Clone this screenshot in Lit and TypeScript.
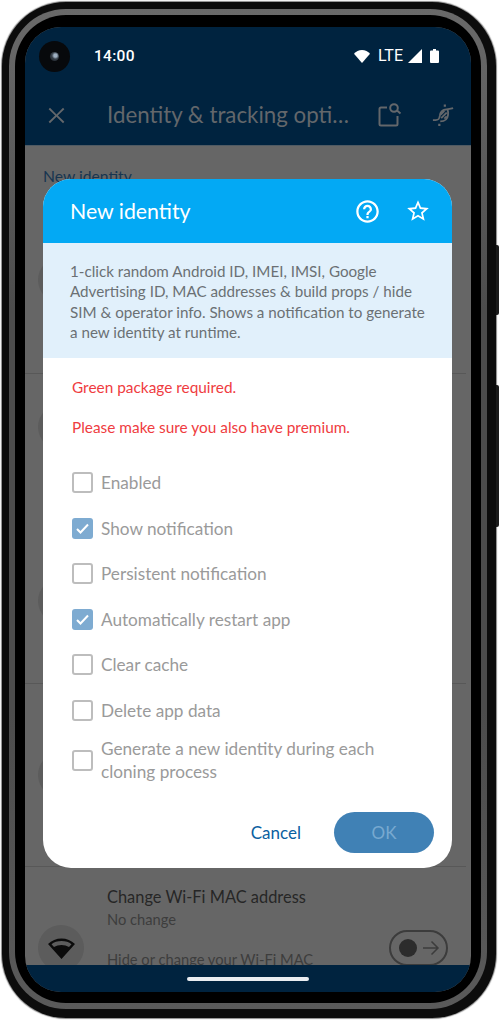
import { LitElement, html, css, svg } from 'lit';
import { customElement } from 'lit/decorators.js';

const OPTIONS = [
  { label: 'Enabled', checked: false },
  { label: 'Show notification', checked: true },
  { label: 'Persistent notification', checked: false },
  { label: 'Automatically restart app', checked: true },
  { label: 'Clear cache', checked: false },
  { label: 'Delete app data', checked: false },
  { label: 'Generate a new identity during each cloning process', checked: false },
];

const icon = (size: number, body: unknown) => html`<svg width=${size} height=${size} viewBox="0 0 24 24" fill="currentColor">${body}</svg>`;

const HELP = svg`<path d="M11 18h2v-2h-2v2zm1-16C6.48 2 2 6.48 2 12s4.48 10 10 10 10-4.48 10-10S17.52 2 12 2zm0 18c-4.41 0-8-3.59-8-8s3.59-8 8-8 8 3.59 8 8-3.59 8-8 8zm0-14c-2.21 0-4 1.79-4 4h2c0-1.1.9-2 2-2s2 .9 2 2c0 2-3 1.75-3 5h2c0-2.25 3-2.5 3-5 0-2.21-1.79-4-4-4z"/>`;
const STAR = svg`<path d="M22 9.24l-7.19-.62L12 2 9.19 8.63 2 9.24l5.46 4.73L5.82 21 12 17.27 18.18 21l-1.63-7.03L22 9.24zM12 15.4l-3.76 2.27 1-4.28-3.32-2.88 4.38-.38L12 6.1l1.71 4.04 4.38.38-3.32 2.88 1 4.28L12 15.4z"/>`;
const CLOSE = svg`<path d="M19 6.41 17.8 5.2 12 11 6.200 5.200 5 6.41 10.800 12 5 17.590 6.200 18.800 12 13 17.800 18.800 19 17.590 13.200 12z"/>`;

@customElement('app-root')
export class AppRoot extends LitElement {
  static styles = css`
    :host {
      display: block;
      width: 500px;
      height: 1021px;
      background: #fff;
      overflow: hidden;
      font-family: Lato, "Noto Sans", sans-serif;
    }
    .phone {
      position: relative;
      box-sizing: border-box;
      width: 494px;
      height: 1016px;
      margin: 2px 0 0 2px;
      padding: 7px 9px 9px 7px;
      border-radius: 64px;
      background: #0c0c0c;
      box-shadow: 0 0 1px 1px #8a8a8a;
    }
    .side-btn {
      position: absolute;
      left: 494px;
      width: 3px;
      background: #1a1a1a;
      border-radius: 0 2px 2px 0;
    }
    .side-btn.power { top: 243px; height: 70px; }
    .side-btn.volume { top: 383px; height: 142px; }
    .rim {
      box-sizing: border-box;
      height: 100%;
      padding: 6px;
      border-radius: 57px;
      background: linear-gradient(#6a6a6a, #4c4c4c 30%, #4c4c4c 70%, #5a5a5a);
    }
    .bezel {
      box-sizing: border-box;
      height: 100%;
      padding: 12px 10px 11px 10px;
      border-radius: 51px;
      background: #000;
    }
    .screen {
      position: relative;
      display: flex;
      flex-direction: column;
      height: 100%;
      border-radius: 36px;
      overflow: hidden;
      background: #666;
    }
    .appbar {
      flex: none;
      height: 119px;
      background: #00233f;
      border-bottom: 1px solid #4f5a63;
      box-sizing: border-box;
    }
    .status {
      display: flex;
      align-items: center;
      height: 58px;
      padding: 0 32px 0 14px;
      color: #fff;
    }
    .camera {
      display: flex;
      align-items: center;
      justify-content: center;
      width: 31px;
      height: 31px;
      border-radius: 50%;
      background: #07090c;
    }
    .lens {
      width: 9px;
      height: 9px;
      border-radius: 50%;
      background: radial-gradient(circle at 60% 40%, #9fb0c2 0 20%, #39424c 45%, #14181d 100%);
    }
    .time {
      margin-left: 24px;
      font: 500 15.5px Roboto, sans-serif;
      letter-spacing: 0.3px;
    }
    .status-icons {
      display: flex;
      align-items: center;
      margin-left: auto;
    }
    .status-icons svg { display: block; }
    .lte {
      margin: 0 5px 0 8px;
      font: 400 16px/16px Roboto, sans-serif;
    }
    .battery { margin-left: 8px; }
    .toolbar {
      display: flex;
      align-items: center;
      height: 60px;
      color: #63676b;
    }
    .toolbar svg { display: block; }
    .toolbar .close { margin-left: 18px; }
    .title {
      width: 247px;
      margin-left: 37px;
      padding-bottom: 2px;
      font-size: 22.3px;
      white-space: nowrap;
      overflow: hidden;
      text-overflow: ellipsis;
    }
    .toolbar .search { margin-left: 24px; }
    .toolbar .dna { margin-left: 30px; }
    .list {
      flex: 1;
      min-height: 0;
      overflow: hidden;
      color: #2a2a2a;
    }
    .row {
      display: flex;
      flex-direction: column;
      box-sizing: border-box;
      border-bottom: 1px solid #585858;
      padding-left: 13px;
      margin-right: 5px;
    }
    .row.first { height: 228px; }
    .row.second { height: 310px; }
    .row.third { height: 183px; }
    .label {
      flex: none;
      box-sizing: border-box;
      margin-left: 5px;
      padding-top: 21px;
      height: 111px;
      font-size: 15.7px;
      color: #173550;
    }
    .blob {
      flex: none;
      width: 46px;
      height: 46px;
      border-radius: 50%;
      background: #5c5c5c;
    }
    .second .blob { margin-top: 30px; }
    .second .blob + .blob { margin-top: 128px; }
    .third .blob { margin-top: 68px; }
    .wifi-row {
      display: flex;
      padding: 19px 23px 0 13px;
    }
    .wifi-row .blob {
      display: flex;
      align-items: center;
      justify-content: center;
      margin-top: 39px;
      color: #0b0b0b;
    }
    .wifi-text {
      flex: 1;
      margin-left: 23px;
      white-space: nowrap;
    }
    .wifi-title { font-size: 16.4px; line-height: 22px; color: #262626; }
    .wifi-sub { font-size: 14.7px; line-height: 22px; color: #3d3d3d; }
    .wifi-desc { margin-top: 18px; font-size: 14.7px; line-height: 22px; color: #3d3d3d; }
    .toggle {
      display: flex;
      align-items: center;
      justify-content: space-between;
      flex: none;
      box-sizing: border-box;
      width: 59px;
      height: 36px;
      margin-top: 44px;
      padding: 0 5px 0 8px;
      border: 2px solid #3c3c3c;
      border-radius: 18px;
      color: #3c3c3c;
    }
    .knob {
      width: 18px;
      height: 18px;
      border-radius: 50%;
      background: #2c2c2c;
    }
    .navbar {
      display: flex;
      justify-content: center;
      align-items: flex-start;
      flex: none;
      box-sizing: border-box;
      height: 27px;
      padding-top: 12px;
      background: #00233f;
    }
    .pill {
      width: 122px;
      height: 4px;
      border-radius: 2px;
      background: #e9edf1;
    }
    .dialog {
      position: absolute;
      left: 18px;
      top: 152px;
      display: flex;
      flex-direction: column;
      width: 409px;
      height: 689px;
      border-radius: 28px;
      overflow: hidden;
      background: #fff;
    }
    .dlg-head {
      display: flex;
      align-items: center;
      flex: none;
      box-sizing: border-box;
      height: 64px;
      padding: 0 21px 0 27px;
      background: #03a9f4;
      color: #fff;
    }
    .dlg-title {
      flex: 1;
      padding-bottom: 1px;
      font-size: 21.3px;
    }
    .dlg-head svg { display: block; }
    .dlg-head .star { margin-left: 24px; }
    .info {
      flex: none;
      box-sizing: border-box;
      height: 115px;
      padding: 18px 20px 0 27px;
      background: #e1f0fb;
      color: #6b7074;
      font-size: 15.2px;
      line-height: 20.4px;
    }
    .warn {
      margin: 0 0 0 29px;
      height: 40px;
      font-size: 15.4px;
      line-height: 20px;
      color: #ef3c3f;
    }
    .warn.first { margin-top: 19px; }
    .options {
      display: flex;
      flex-direction: column;
      margin-top: 3px;
      padding: 0 29px;
    }
    .opt {
      display: flex;
      align-items: center;
      gap: 8px;
      min-height: 45.5px;
      color: #9a9a9a;
      font-size: 17.2px;
      line-height: 23px;
    }
    .opt.multi { margin-top: 4px; }
    .box {
      display: flex;
      align-items: center;
      justify-content: center;
      flex: none;
      box-sizing: border-box;
      width: 21px;
      height: 21px;
      border: 2px solid #bdbdbd;
      border-radius: 3px;
      color: #fff;
    }
    .box.on {
      border: none;
      background: #7eabd1;
    }
    .actions {
      display: flex;
      align-items: center;
      justify-content: flex-end;
      margin-top: auto;
      padding: 0 18px 15px 0;
    }
    .cancel {
      margin-right: 33px;
      font-size: 17px;
      color: #0a60a0;
    }
    .ok {
      width: 100px;
      height: 41px;
      border-radius: 21px;
      background: #4081b5;
      color: #78a9d0;
      font-size: 17px;
      line-height: 41px;
      text-align: center;
    }
  `;

  render() {
    return html`
      <div class="phone">
        <div class="side-btn power"></div>
        <div class="side-btn volume"></div>
        <div class="rim">
          <div class="bezel">
            <div class="screen">
              <div class="appbar">
                <div class="status">
                  <div class="camera"><div class="lens"></div></div>
                  <span class="time">14:00</span>
                  <div class="status-icons">
                    <svg width="16" height="13" viewBox="0 0 16 13" fill="currentColor"><path d="M8 13 0 3.800C2 1.500 4.800 0 8 0s6 1.500 8 3.800z"/></svg>
                    <span class="lte">LTE</span>
                    <svg width="14" height="14" viewBox="0 0 14 14" fill="currentColor"><path d="M14 0v14H0z"/></svg>
                    <svg class="battery" width="9" height="14" viewBox="0 0 9 14" fill="currentColor"><path d="M3 0h3v1.500h2a1 1 0 0 1 1 1V13a1 1 0 0 1-1 1H1a1 1 0 0 1-1-1V2.500a1 1 0 0 1 1-1h2z"/></svg>
                  </div>
                </div>
                <div class="toolbar">
                  <span class="close">${icon(27, CLOSE)}</span>
                  <span class="title">Identity &amp; tracking options</span>
                  <span class="search">
                    <svg width="24" height="24" viewBox="0 0 24 24" fill="none" stroke="currentColor" stroke-width="2">
                      <path d="M9 4.500H3a1.500 1.500 0 0 0-1.500 1.500v15A1.500 1.500 0 0 0 3 22.500h15a1.500 1.500 0 0 0 1.500-1.500V13"/>
                      <circle cx="16" cy="5" r="3.800"/>
                      <path d="M19 7.500l3.500 3"/>
                    </svg>
                  </span>
                  <span class="dna">
                    <svg width="22" height="22" viewBox="0 0 24 24" fill="none" stroke="currentColor" stroke-width="2">
                      <path d="M1 17.500h3c3.500 0 4-1.500 4.500-4.500.5-4 3-6.500 6.500-7 3-.5 5-.5 8-1.500"/>
                      <path d="M9 19c4.500 0 8-2.500 8.500-7 .3-2.500 0-4.500-.5-6"/>
                      <path d="M9.500 11.500l4-4M10 15.500l6-6M13.500 16l2.500-2.500"/>
                      <path d="M14 3V.5M8 21.500V24" stroke-width="2.400"/>
                    </svg>
                  </span>
                </div>
              </div>
              <div class="list">
                <div class="row first">
                  <div class="label">New identity</div>
                  <div class="blob"></div>
                </div>
                <div class="row second">
                  <div class="blob"></div>
                  <div class="blob"></div>
                </div>
                <div class="row third">
                  <div class="blob"></div>
                </div>
                <div class="wifi-row">
                  <div class="blob">
                    <svg width="27" height="21" viewBox="0 0 27 21" fill="currentColor" fill-rule="evenodd"><path d="M13.500 21 0 6C3.500 2.500 8.500.5 13.500.5S23.500 2.500 27 6zM3.500 6.200 6 9c2.200-1.300 4.700-2 7.500-2s5.300.7 7.500 2l2.500-2.800C21 4 17.500 3 13.500 3S6 4 3.500 6.200z"/></svg>
                  </div>
                  <div class="wifi-text">
                    <div class="wifi-title">Change Wi-Fi MAC address</div>
                    <div class="wifi-sub">No change</div>
                    <div class="wifi-desc">Hide or change your Wi-Fi MAC</div>
                  </div>
                  <div class="toggle">
                    <div class="knob"></div>
                    <svg width="20" height="20" viewBox="0 0 20 20" fill="none" stroke="currentColor" stroke-width="1.500"><path d="M2 10h15M10.500 3.500 17 10l-6.500 6.500"/></svg>
                  </div>
                </div>
              </div>
              <div class="navbar"><div class="pill"></div></div>
              <div class="dialog">
                <div class="dlg-head">
                  <span class="dlg-title">New identity</span>
                  ${icon(27, HELP)}
                  <span class="star">${icon(26, STAR)}</span>
                </div>
                <div class="info">1-click random Android ID, IMEI, IMSI, Google Advertising ID, MAC addresses &amp; build props / hide SIM &amp; operator info. Shows a notification to generate a new identity at runtime.</div>
                <p class="warn first">Green package required.</p>
                <p class="warn">Please make sure you also have premium.</p>
                <div class="options">
                  ${OPTIONS.map(o => html`
                    <div class="opt ${o.label.length > 30 ? 'multi' : ''}">
                      <span class="box ${o.checked ? 'on' : ''}">
                        ${o.checked ? html`<svg width="15" height="15" viewBox="0 0 15 15" fill="none" stroke="currentColor" stroke-width="2"><path d="M2 8l3.500 3.500L13 3.500"/></svg>` : ''}
                      </span>
                      <span>${o.label}</span>
                    </div>
                  `)}
                </div>
                <div class="actions">
                  <span class="cancel">Cancel</span>
                  <span class="ok">OK</span>
                </div>
              </div>
            </div>
          </div>
        </div>
      </div>
    `;
  }
}
